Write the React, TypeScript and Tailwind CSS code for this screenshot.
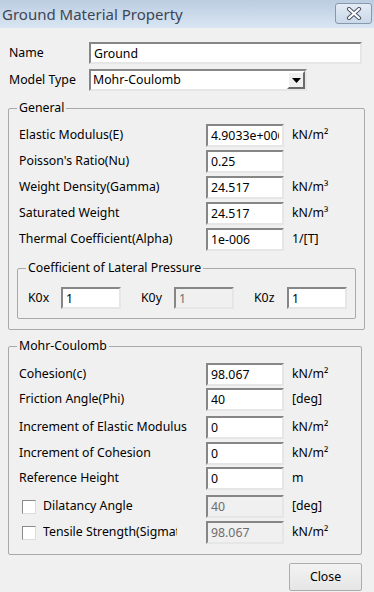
import React from "react";

const sunken =
  "border-2 border-t-[#868686] border-l-[#868686] border-r-[#e6e6e6] border-b-[#e6e6e6]";

const fieldCls =
  "h-[23px] w-[78px] bg-white px-[3px] text-[12.3px] text-black outline-none " + sunken;

const disabledCls =
  "h-[23px] w-[78px] bg-[#f0f0f0] px-[3px] text-[12.3px] text-[#6d6d6d] outline-none " + sunken;

type RowProps = { label: string; value: string; unit?: string; mt?: string };

const Row = ({ label, value, unit, mt = "" }: RowProps) => (
  <div className={"flex items-center h-[23px] pl-[2px] " + mt}>
    <span className="w-[187px] whitespace-nowrap">{label}</span>
    <input className={fieldCls} value={value} readOnly />
    {unit && <span className="ml-[8px] whitespace-nowrap">{unit}</span>}
  </div>
);

type CheckRowProps = { label: string; value: string; unit: string; mt?: string };

const CheckRow = ({ label, value, unit, mt = "" }: CheckRowProps) => (
  <div className={"flex items-center h-[23px] pl-[2px] " + mt}>
    <span className="ml-[3px] h-[14px] w-[14px] bg-white border border-t-[#8a8a8a] border-l-[#8a8a8a] border-r-[#dcdcdc] border-b-[#dcdcdc]" />
    <span className="ml-[7px] w-[134px] overflow-hidden whitespace-nowrap">{label}</span>
    <input className={"ml-[29px] " + disabledCls} value={value} readOnly />
    <span className="ml-[8px] whitespace-nowrap">{unit}</span>
  </div>
);

const K = ({ label, value, disabled }: { label: string; value: string; disabled?: boolean }) => (
  <div className="flex items-center">
    <span className="w-[33px]">{label}</span>
    <input
      className={(disabled ? disabledCls : fieldCls) + " !w-[60px] !h-[22px]"}
      value={value}
      readOnly
    />
  </div>
);

export default function App() {
  return (
    <div
      className="w-[374px] h-[592px] overflow-hidden bg-[#f0f0f0] text-[12.3px] text-black"
      style={{ fontFamily: '"Segoe UI", "Noto Sans", "Open Sans", sans-serif' }}
    >
      {/* title bar */}
      <div className="flex h-[28px] bg-gradient-to-b from-[#bccde1] to-[#d9e5f2]">
        <span className="ml-[2px] mt-[4px] text-[15px] leading-[20px] text-[#3b4656]">
          Ground Material Property
        </span>
        <div className="ml-auto mr-[2px] mt-[3px] flex h-[21px] w-[37px] items-center justify-center rounded-[3px] border border-[#8797ad] bg-gradient-to-b from-[#e4ecf6] to-[#cad8e9]">
          <svg width="16" height="13" viewBox="0 0 16 13">
            <path d="M3 2 L13 11 M13 2 L3 11" stroke="#4b5566" strokeWidth="4.2" strokeLinecap="round" />
            <path d="M3 2 L13 11 M13 2 L3 11" stroke="#ffffff" strokeWidth="2.2" strokeLinecap="round" />
          </svg>
        </div>
      </div>

      <div className="px-[8px] pt-[14px]">
        <div className="flex items-center h-[22px]">
          <span className="w-[81px] pl-[1px]">Name</span>
          <input className={"h-[22px] w-[273px] bg-white px-[3px] outline-none " + sunken} value="Ground" readOnly />
        </div>
        <div className="mt-[5px] flex items-center h-[22px]">
          <span className="w-[81px] pl-[1px]">Model Type</span>
          <div className={"flex h-[22px] w-[218px] items-center bg-white " + sunken}>
            <span className="pl-[2px] flex-1">Mohr-Coulomb</span>
            <div className="flex h-[18px] w-[18px] items-center justify-center border-2 border-t-[#ffffff] border-l-[#ffffff] border-r-[#6a6a6a] border-b-[#6a6a6a] bg-[#f0f0f0]">
              <svg width="9" height="5" viewBox="0 0 9 5">
                <path d="M0 0 H9 L4.5 5 Z" fill="#000" />
              </svg>
            </div>
          </div>
        </div>

        {/* General */}
        <fieldset className="mt-[9px] w-[354px] rounded-[2px] border border-[#a9a9a9] px-[8px] pt-[8px] pb-[10px]">
          <legend className="px-[2px] leading-[16px]">General</legend>
          <div className="flex flex-col gap-[3px]">
            <Row label="Elastic Modulus(E)" value="4.9033e+006" unit="kN/m²" />
            <Row label="Poisson's Ratio(Nu)" value="0.25" />
            <Row label="Weight Density(Gamma)" value="24.517" unit="kN/m³" />
            <Row label="Saturated Weight" value="24.517" unit="kN/m³" />
            <Row label="Thermal Coefficient(Alpha)" value="1e-006" unit="1/[T]" />
          </div>
          <fieldset className="mt-[9px] w-[339px] rounded-[2px] border border-[#a9a9a9] px-[8px] pt-[11px] pb-[9px]">
            <legend className="px-[2px] leading-[16px]">Coefficient of Lateral Pressure</legend>
            <div className="flex gap-[20px] pl-[2px]">
              <K label="K0x" value="1" />
              <K label="K0y" value="1" disabled />
              <K label="K0z" value="1" />
            </div>
          </fieldset>
        </fieldset>

        {/* Mohr-Coulomb */}
        <fieldset className="mt-[8px] w-[354px] rounded-[2px] border border-[#a9a9a9] px-[8px] pt-[9px] pb-[10px]">
          <legend className="px-[2px] leading-[16px]">Mohr-Coulomb</legend>
          <Row label="Cohesion(c)" value="98.067" unit="kN/m²" />
          <Row label="Friction Angle(Phi)" value="40" unit="[deg]" mt="mt-[2px]" />
          <Row label="Increment of Elastic Modulus" value="0" unit="kN/m²" mt="mt-[5px]" />
          <Row label="Increment of Cohesion" value="0" unit="kN/m²" mt="mt-[3px]" />
          <Row label="Reference Height" value="0" unit="m" mt="mt-[2px]" />
          <CheckRow label="Dilatancy Angle" value="40" unit="[deg]" mt="mt-[5px]" />
          <CheckRow label="Tensile Strength(Sigmat)" value="98.067" unit="kN/m²" mt="mt-[3px]" />
        </fieldset>

        <div className="mt-[8px] flex justify-end pr-[4px]">
          <button className="h-[28px] w-[73px] rounded-[2px] border border-[#adadad] bg-gradient-to-b from-[#f3f3f3] to-[#e6e6e6] text-[12.3px]">
            Close
          </button>
        </div>
      </div>
    </div>
  );
}
